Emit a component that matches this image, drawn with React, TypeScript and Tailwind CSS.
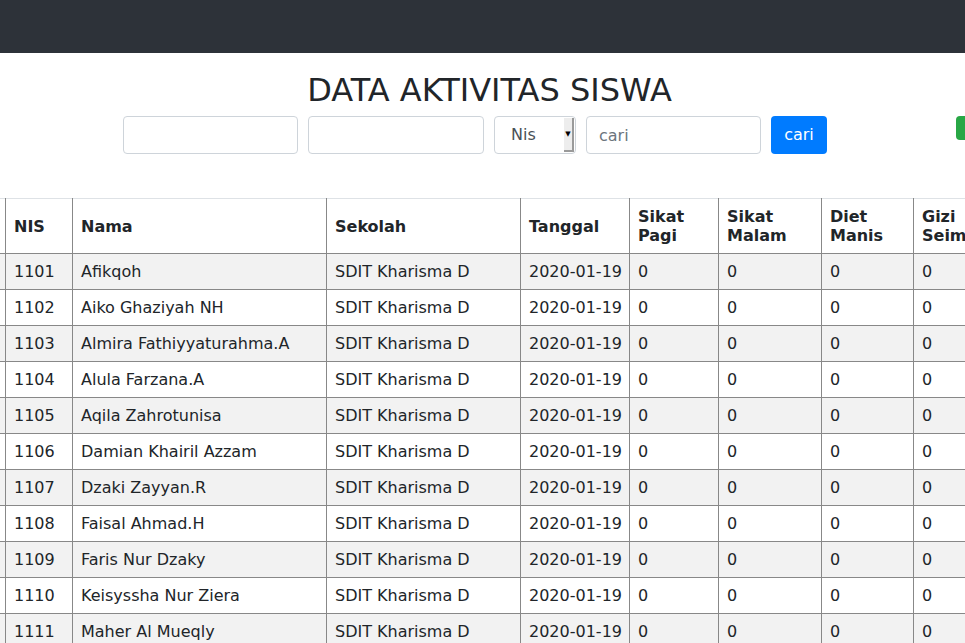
import React from "react";

const rows: [string, string][] = [
  ["1101", "Afikqoh"],
  ["1102", "Aiko Ghaziyah NH"],
  ["1103", "Almira Fathiyyaturahma.A"],
  ["1104", "Alula Farzana.A"],
  ["1105", "Aqila Zahrotunisa"],
  ["1106", "Damian Khairil Azzam"],
  ["1107", "Dzaki Zayyan.R"],
  ["1108", "Faisal Ahmad.H"],
  ["1109", "Faris Nur Dzaky"],
  ["1110", "Keisyssha Nur Ziera"],
  ["1111", "Maher Al Mueqly"],
  ["1112", "Muhammad Rafi"],
];

const th = "border border-[#888] border-t-[#dee2e6] px-2 py-2 text-left align-middle font-bold leading-[1.2]";
const td = "border border-[#888] px-2 h-[36px] align-middle whitespace-nowrap overflow-hidden";

export default function App() {
  return (
    <div className="min-h-screen bg-white text-[#212529] font-['DejaVu_Sans',sans-serif] text-[16px] overflow-hidden">
      <nav className="h-[53px] bg-[#2d3239]" />

      <h1 className="mt-[18px] text-center text-[32px] leading-[38px] font-normal pl-[14px]">
        DATA AKTIVITAS SISWA
      </h1>

      <div className="mt-[7px] flex items-start pl-[123px]">
        <input className="shrink-0 w-[175px] h-[38px] rounded border border-[#ced4da] px-3" />
        <input className="shrink-0 ml-[10px] w-[176px] h-[38px] rounded border border-[#ced4da] px-3" />
        <div className="shrink-0 ml-[10px] w-[82px] h-[38px] rounded border border-[#ced4da] flex items-stretch overflow-hidden">
          <span className="flex-1 flex items-center pl-4 text-[#495057]">Nis</span>
          <span className="w-[10px] my-[1px] mr-[1px] bg-[#ededed] border-r-2 border-b-2 border-[#9a9a9a] flex items-center justify-center text-[7px] leading-none text-black">
            ▼
          </span>
        </div>
        <input
          placeholder="cari"
          className="shrink-0 ml-[10px] w-[175px] h-[38px] rounded border border-[#ced4da] px-3 placeholder:text-[#6c757d]"
        />
        <button className="shrink-0 ml-[10px] w-[56px] h-[38px] rounded bg-[#007bff] text-white">cari</button>
        <div className="shrink-0 ml-[129px] w-[20px] h-[24px] rounded bg-[#28a745]" />
      </div>

      <div className="mt-[44px] overflow-hidden">
        <table className="table-fixed border-collapse ml-[-40px] w-[1200px]">
          <colgroup>
            <col className="w-[45px]" />
            <col className="w-[67px]" />
            <col className="w-[254px]" />
            <col className="w-[194px]" />
            <col className="w-[109px]" />
            <col className="w-[89px]" />
            <col className="w-[103px]" />
            <col className="w-[92px]" />
            <col className="w-[130px]" />
            <col className="w-[117px]" />
          </colgroup>
          <thead>
            <tr>
              <th className={th}>No</th>
              <th className={th}>NIS</th>
              <th className={th}>Nama</th>
              <th className={th}>Sekolah</th>
              <th className={th}>Tanggal</th>
              <th className={th}>Sikat<br />Pagi</th>
              <th className={th}>Sikat<br />Malam</th>
              <th className={th}>Diet<br />Manis</th>
              <th className={th}>Gizi<br />Seimbang</th>
              <th className={th}>Olahraga</th>
            </tr>
          </thead>
          <tbody>
            {rows.map(([nis, nama], i) => (
              <tr key={nis} className={i % 2 === 0 ? "bg-[#f2f2f2]" : "bg-white"}>
                <td className={td}>{i + 1}</td>
                <td className={td}>{nis}</td>
                <td className={td}>{nama}</td>
                <td className={td}>SDIT Kharisma D</td>
                <td className={td}>2020-01-19</td>
                <td className={td}>0</td>
                <td className={td}>0</td>
                <td className={td}>0</td>
                <td className={td}>0</td>
                <td className={td}>0</td>
              </tr>
            ))}
          </tbody>
        </table>
      </div>
    </div>
  );
}
